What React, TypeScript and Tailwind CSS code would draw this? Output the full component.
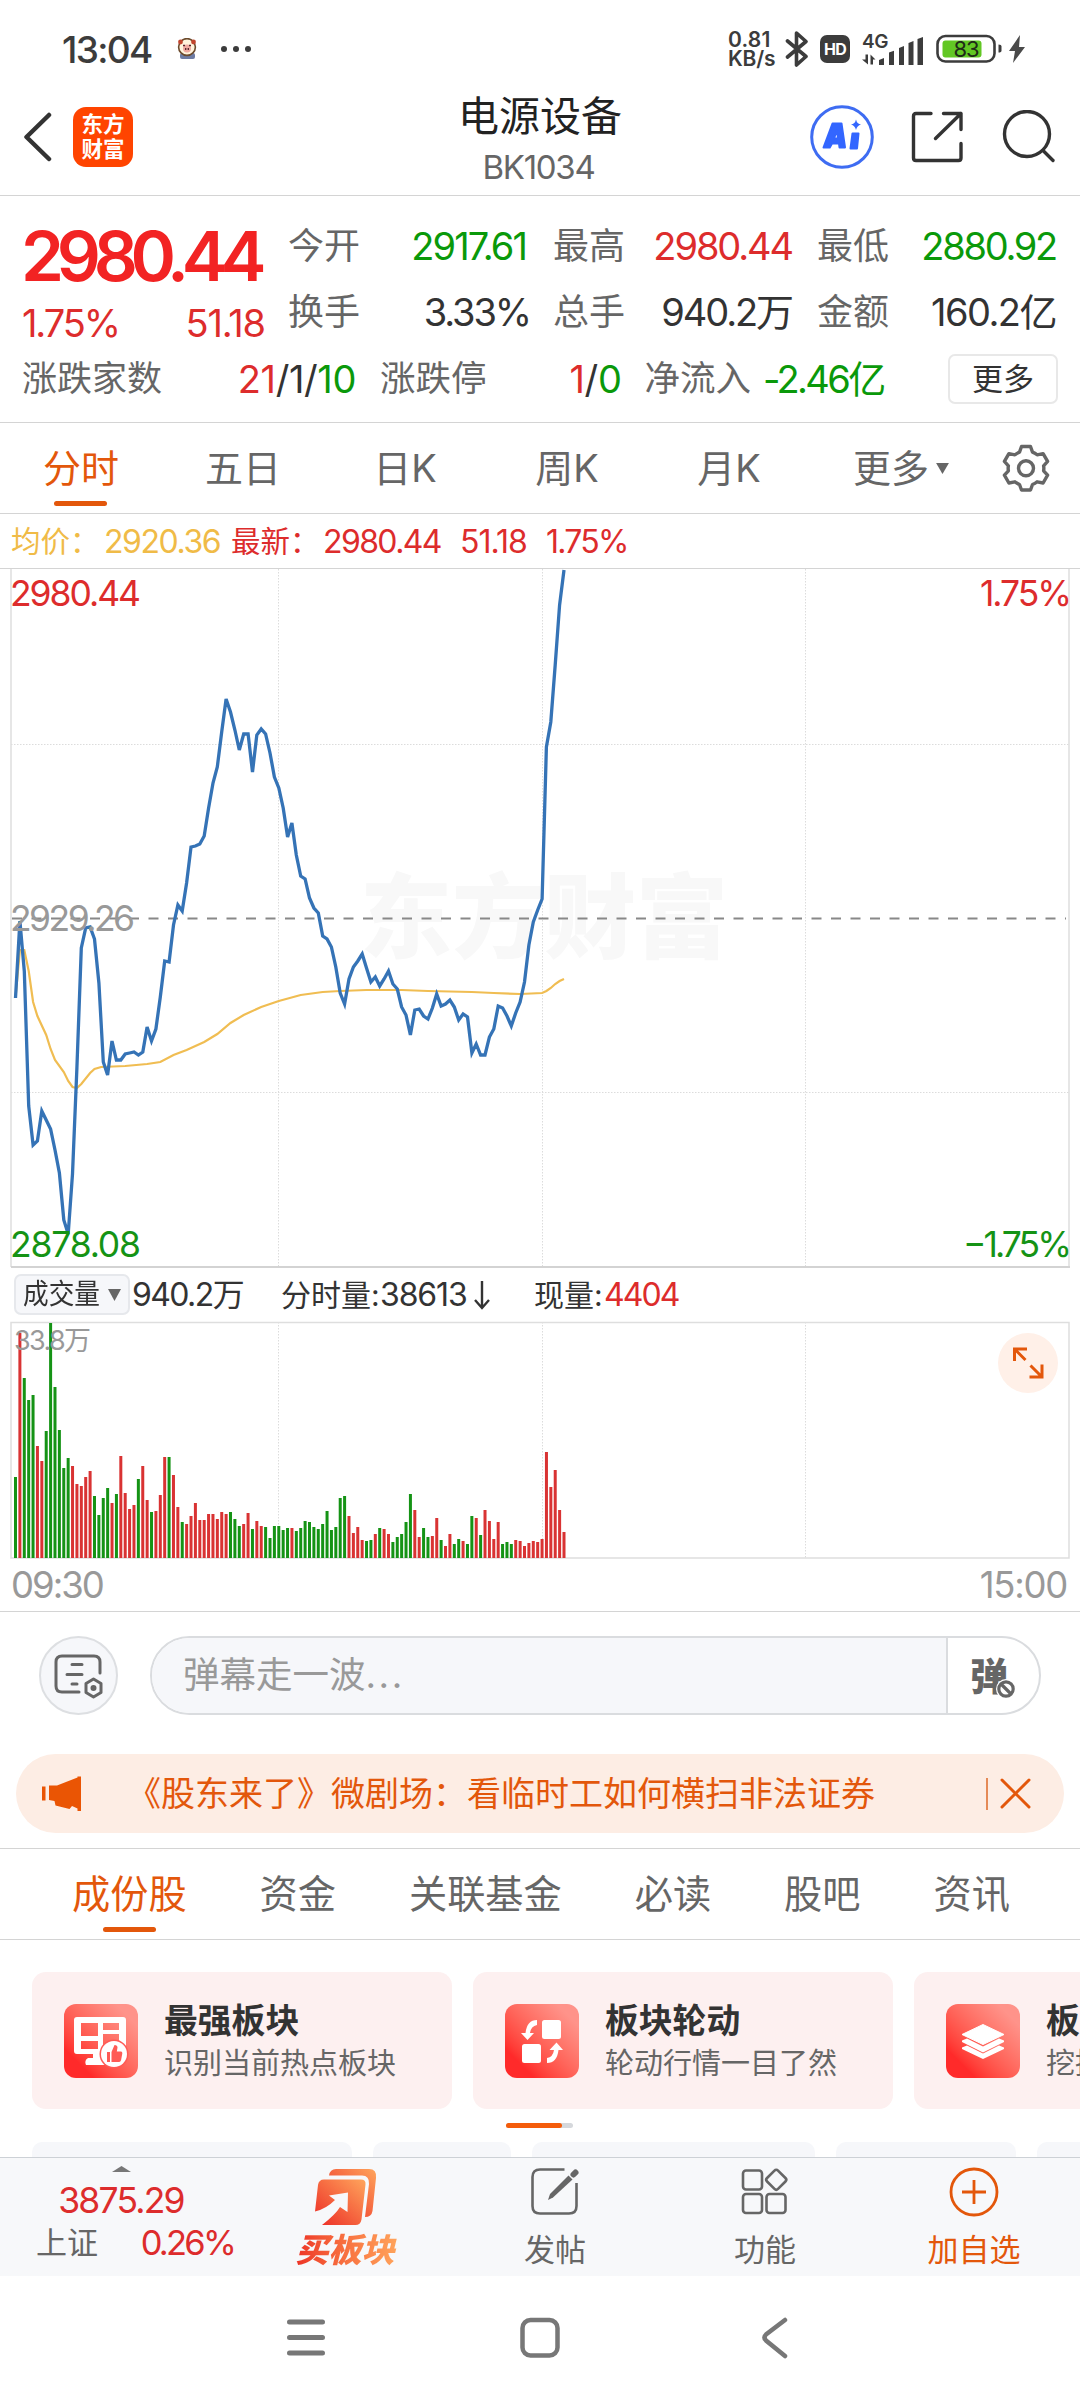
import type { ReactNode } from 'react';
import clsx from 'clsx';

const STEP = 4.388;
const FIRST_X = 15.5;

// one value per trading minute, measured from the top of the price chart
const priceLine = [
  430, 353, 403, 538, 577, 573, 543, 552, 561, 582, 605, 652, 666, 606, 500, 380, 360, 359, 371, 415,
  494, 507, 473, 492, 492, 486, 485, 484, 487, 484, 459, 473, 461, 429, 393, 394, 357, 337, 343, 315,
  279, 278, 276, 268, 240, 215, 199, 164, 131, 144, 162, 182, 166, 166, 204, 167, 161, 166, 185, 209,
  220, 240, 269, 255, 287, 308, 311, 330, 340, 345, 368, 371, 379, 399, 425, 436, 411, 399, 393, 386,
  400, 414, 409, 418, 411, 403, 416, 421, 439, 447, 467, 442, 441, 448, 451, 440, 426, 438, 436, 432,
  439, 452, 446, 449, 485, 476, 487, 487, 469, 461, 438, 440, 448, 458, 445, 434, 414, 377, 354, 342,
  331, 179, 154, 97, 37, 2,
];

const averageLine: [number, number][] = [
  [0, 430], [1, 382], [2, 382], [3, 403], [4, 434], [5, 448], [7, 467], [8, 481], [9, 492], [11, 504],
  [12, 513], [13, 519], [14, 520], [15, 516], [17, 505], [18, 501], [19.5, 499], [25, 498], [30, 496],
  [33, 494], [36, 487], [39, 482], [41, 478], [43, 474], [46, 466], [49, 455], [52, 447], [56, 439],
  [60, 433], [65, 427], [70, 424], [74, 423], [80, 422], [88, 422], [94, 423], [104, 424], [109, 425],
  [115, 426], [120, 425], [121, 423], [122, 420], [123, 416], [124, 413], [125, 411],
];

// bar heights, negative for a falling minute
const volumes = [
  -81, 225, -180, -158, -163, 112, 97, -127, -235, -171, -128, -90, -100, 92, 74, 72, 81, 87, -62, -43,
  -60, -70, 55, -64, 102, 65, 49, 53, -79, 92, 58, -46, 47, 63, 101, -101, 83, 51, -36, 34,
  42, 55, 38, 38, 44, 44, 39, 46, 44, -46, -39, -32, 34, 45, -29, 37, 32, -31, -20, -32,
  -32, -28, -30, 30, -27, -30, -37, -36, -31, -29, -34, -47, -28, -31, -60, -62, 42, 25, 31, 18,
  -17, -18, 24, -30, 29, 24, -16, -21, -24, -36, -64, 48, 21, -30, -21, 22, 40, -18, 12, 24,
  -14, -19, 17, -14, -42, 40, -23, 48, 37, 19, 36, -14, -16, -14, 18, 17, 12, 15, 17, 16,
  19, 106, 71, 88, 48, 26,
];

const minuteX = (i: number) => FIRST_X + i * STEP;

function Num({ children, className = 'tracking-[-0.055em]' }: { children: ReactNode; className?: string }) {
  return <span className={clsx('whitespace-pre', className)}>{children}</span>;
}

function StatusBar() {
  return (
    <div className="flex items-center h-[98px] pl-[62px] pr-[54px] text-[#3c3c3c]">
      <Num className="w-[90px] text-[37px] font-medium tracking-[-0.045em]">13:04</Num>
      <svg className="ml-[25px]" width="20" height="22" viewBox="0 0 20 22">
        <rect x="3" y="15" width="15" height="6" rx="2" fill="#6d7ba3" />
        <circle cx="10" cy="9" r="8.4" fill="#fff3dc" stroke="#6b4a2c" strokeWidth="1.6" />
        <circle cx="3.5" cy="4" r="2.4" fill="#c2452d" />
        <circle cx="16.5" cy="4" r="2.4" fill="#c2452d" />
        <circle cx="10" cy="10.5" r="4" fill="#f0a9a0" />
        <path d="M6 7.5h2M12 7.5h2M8.7 10v2M11.3 10v2" stroke="#54232a" strokeWidth="1.3" />
      </svg>
      <svg className="ml-[23px]" width="32" height="8" viewBox="0 0 32 8" fill="#3c3c3c">
        <circle cx="4" cy="4" r="3" />
        <circle cx="16" cy="4" r="3" />
        <circle cx="28" cy="4" r="3" />
      </svg>
      <div className="ml-auto flex items-center">
        <div className="w-[49px] text-[21px] leading-[19px] font-semibold">
          <div className="tracking-[0.01em]">0.81</div>
          <div className="tracking-[-0.01em]">KB/s</div>
        </div>
        <svg className="ml-[8px]" width="24" height="38" viewBox="0 0 24 38" fill="none" stroke="#3c3c3c" strokeWidth="3.6" strokeLinejoin="round" strokeLinecap="round">
          <path d="M2.5 11 21 26.5 11.5 35V3L21 11.5 2.5 27" />
        </svg>
        <div className="ml-[11px] flex h-[28px] w-[30px] items-center justify-center rounded-[7px] bg-[#3c3c3c] text-[16px] font-bold tracking-[-0.04em] text-white">
          HD
        </div>
        <div className="ml-[11px] h-[34px] w-[62px]">
          <div className="h-[16px] pl-[1px] text-[19px] leading-[19px] font-semibold tracking-[-0.02em]">4G</div>
          <svg className="-mt-[16px] block" width="62" height="34" viewBox="0 0 62 34" fill="#3c3c3c">
            <path d="M4.5 22.5h2.5v10L1 27.5h3.5zM9.5 32.5v-10l5 5H12v5z" />
            <path d="M18 28l5-2v7h-5zM28 20.5l5-1.8V33h-5zM38 16l5-2v19h-5zM47.5 11l5-2v24h-5zM56.5 7l5.5-2v28h-5.5z" />
          </svg>
        </div>
        <svg className="ml-[13px]" width="68" height="30" viewBox="0 0 68 30">
          <rect x="1.5" y="2" width="57" height="25.5" rx="8" fill="none" stroke="#3c3c3c" strokeWidth="2.6" />
          <rect x="6.5" y="6.5" width="39" height="17" rx="3" fill="#62c724" />
          <path d="M62.5 10.5q3 0 3 2v4q0 2-3 2z" fill="#3c3c3c" />
          <text x="17.5" y="22.5" fontSize="22" textLength="26" fill="#1f2a18">83</text>
        </svg>
        <svg className="ml-[4px]" width="18" height="28" viewBox="0 0 18 28" fill="#4a4a4a">
          <path d="M12 0 1 16h6L5 28 17 12h-6z" />
        </svg>
      </div>
    </div>
  );
}

function Header() {
  return (
    <div className="grid h-[98px] grid-cols-[1fr_auto_1fr] border-b border-[#d4d4d4]">
      <div className="flex items-center pl-[22px] pb-[19px]">
        <svg width="30" height="50" viewBox="0 0 30 50" fill="none" stroke="#333" strokeWidth="4.5" strokeLinecap="round" strokeLinejoin="round">
          <path d="M27 3 4.5 25 27 47" />
        </svg>
        <div className="ml-[21px] flex h-[60px] w-[60px] flex-col items-center justify-center rounded-[13px] bg-[#ff4400] text-[21.5px] font-bold leading-[25px] text-white">
          <span>东方</span>
          <span>财富</span>
        </div>
      </div>
      <div className="flex flex-col items-center">
        <div className="h-[42px] text-[41px] leading-[37px] text-[#222]">电源设备</div>
        <Num className="mt-[7px] mr-[3px] text-[33px] leading-[40px] tracking-[-0.04em] text-[#666]">BK1034</Num>
      </div>
      <div className="flex items-center justify-end pr-[24px] pb-[19px]">
        <svg width="64" height="64" viewBox="0 0 64 64">
          <circle cx="32" cy="32" r="30.3" fill="none" stroke="#3e6cf2" strokeWidth="3" />
          <path fillRule="evenodd" fill="#3366ff" stroke="#3366ff" strokeWidth="2" strokeLinejoin="round" d="M22.5 18.5h9l3.500 24h-5.5l-.5-4h-7l-2.200 4h-6.300zM27 25.500l-3 8h4z" />
          <path fill="#3366ff" stroke="#3366ff" strokeWidth="2" strokeLinejoin="round" d="M42.500 28.500h6l-1.500 15h-6.500z" />
          <path fill="#3366ff" d="M46 14.500q1 4.500 5 5-4 1-5 5.500-1-4.500-5-5.500 4-.5 5-5z" />
        </svg>
        <svg className="ml-[36px]" width="54" height="54" viewBox="0 0 54 54" fill="none" stroke="#333" strokeWidth="3.4" strokeLinecap="round" strokeLinejoin="round">
          <path d="M21 3.5H6Q3.5 3.5 3.5 6v42q0 2.5 2.5 2.5h42.5q2.5 0 2.5-2.5V33.5" />
          <path d="M33.5 3.5H51v16M51 3.5 25.5 28.5" />
        </svg>
        <svg className="ml-[38px]" width="54" height="54" viewBox="0 0 54 54" fill="none" stroke="#333" strokeWidth="3.4" strokeLinecap="round">
          <circle cx="25" cy="24" r="22.5" />
          <path d="M41 40.5 51 50.5" />
        </svg>
      </div>
    </div>
  );
}

const quotes = [
  { label: '今开', value: '2917.61', color: 'pr-[2px] text-[#0a990a] tracking-[-0.05em]' },
  { label: '最高', value: '2980.44', color: 'text-[#dd2c2c] tracking-[-0.055em]' },
  { label: '最低', value: '2880.92', color: 'text-[#0a990a] tracking-[-0.06em]' },
  { label: '换手', value: '3.33%', color: '-mr-[2px] text-[#333] tracking-[-0.055em]' },
  { label: '总手', value: '940.2万', color: 'text-[#333] tracking-[-0.055em]' },
  { label: '金额', value: '160.2亿', color: 'text-[#333] tracking-[-0.04em]' },
];

function Quote() {
  return (
    <div className="h-[227px] border-b border-[#d4d4d4] pl-[23px] pr-[22px] pt-[17px]">
      <div className="flex h-[132px]">
        <div className="w-[240px] text-[#dd2c2c]">
          <div className="-ml-[2px] flex h-[86px] items-center">
            <Num className="text-[69px] font-semibold tracking-[-0.105em] text-[#f22323]">2980.44</Num>
          </div>
          <div className="-ml-[1px] flex h-[48px] items-center justify-between text-[38px]">
            <Num className="tracking-[-0.055em]">1.75%</Num>
            <Num className="-mr-[2px] tracking-[-0.03em]">51.18</Num>
          </div>
        </div>
        <div className="ml-[25px] grid grid-cols-[240px_239px_239px] gap-x-[25px] grid-rows-[66px_66px]">
          {quotes.map((q) => (
            <div key={q.label} className="flex items-center justify-between">
              <span className="text-[36px] text-[#666]">{q.label}</span>
              <Num className={clsx('text-[38px]', q.color)}>{q.value}</Num>
            </div>
          ))}
        </div>
      </div>
      <div className="-ml-[1px] flex h-[67px] items-center text-[35px] text-[#666]">
        <span className="w-[214px]">涨跌家数</span>
        <Num className="w-[120px] text-right text-[38px] tracking-[-0.01em] text-[#333]">
          <span className="text-[#dd2c2c]">21</span>/1/<span className="text-[#0a990a]">10</span>
        </Num>
        <span className="ml-[24px] text-[35.5px]">涨跌停</span>
        <Num className="w-[135px] text-right text-[38px] tracking-[-0.01em] text-[#333]">
          <span className="text-[#dd2c2c]">1</span>/<span className="text-[#0a990a]">0</span>
        </Num>
        <span className="ml-[23px] text-[35.5px]">净流入</span>
        <Num className="ml-[12px] text-[38px] tracking-[-0.07em] text-[#0a990a]">-2.46亿</Num>
        <span className="ml-auto flex h-[50px] w-[110px] items-center justify-center rounded-[7px] border-2 border-[#e8e8e8] text-[31px] text-[#333]">
          更多
        </span>
      </div>
    </div>
  );
}

function PeriodTabs() {
  return (
    <div className="grid h-[91px] grid-cols-[162px_162px_162px_162px_162px_182px_1fr] items-center border-b border-[#d4d4d4] text-center text-[38px] text-[#666]">
      <div className="relative text-[#e3570b]">
        分时
        <span className="absolute bottom-[-19px] left-[54px] h-[5px] w-[53px] rounded-full bg-[#e3570b]" />
      </div>
      <div>五日</div>
      <div>日K</div>
      <div>周K</div>
      <div>月K</div>
      <div className="flex items-center justify-center gap-[7px]">
        更多
        <svg width="13" height="11" viewBox="0 0 14 12" fill="#666">
          <path d="M0 0h14L7 12z" />
        </svg>
      </div>
      <svg className="ml-[9px]" width="50" height="50" viewBox="0 0 50 50" fill="none" stroke="#666" strokeWidth="3.4" strokeLinejoin="round">
        <path d="M20.5 3.5h9l2 5.6q2.5 1 4.6 2.7l6-1.2 4.5 7.8-4 4.4q.5 2.5 0 5l4 4.4-4.5 7.8-6-1.2q-2.1 1.7-4.6 2.7l-2 5.5h-9l-2-5.5q-2.5-1-4.6-2.7l-6 1.2-4.5-7.8 4-4.4q-.5-2.5 0-5l-4-4.4 4.5-7.8 6 1.2q2.1-1.7 4.6-2.7z" />
        <circle cx="25" cy="25.3" r="7.5" />
      </svg>
    </div>
  );
}

function Legend() {
  return (
    <div className="flex h-[55px] items-center text-[32px] text-[#dd2c2c]">
      <span className="ml-[11px] w-[93px] text-[29.5px] text-[#f0bb47] whitespace-nowrap">均价：</span>
      <Num className="w-[127px] tracking-[-0.045em] text-[#f0bb47]">2920.36</Num>
      <span className="w-[92px] text-[29.5px] whitespace-nowrap">最新：</span>
      <Num className="w-[137px] tracking-[-0.05em]">2980.44</Num>
      <Num className="w-[86px] tracking-[-0.03em]">51.18</Num>
      <Num className="tracking-[-0.055em]">1.75%</Num>
    </div>
  );
}

function PriceChart() {
  const price = priceLine.map((y, i) => `${minuteX(i).toFixed(1)},${y}`).join(' ');
  const average = averageLine.map(([i, y]) => `${minuteX(i).toFixed(1)},${y}`).join(' ');
  return (
    <svg className="-mt-[1px] block" width="1080" height="700" viewBox="0 0 1080 700" fontSize="35.5">
      <text x="360" y="383" fontSize="92" fontWeight="900" fill="#f8f8f8" textLength="368">东方财富</text>
      <g stroke="#dcdcdc" strokeDasharray="1.5 1.5">
        <path d="M278.5 1V699M542.5 1V699M805.5 1V699M11 176.5H1069M11 524.5H1069" />
      </g>
      <path d="M0 .5H1080" stroke="#d4d4d4" />
      <path d="M11 1V699M1069 1V699" stroke="#dedede" strokeWidth="1.5" />
      <path d="M11 699H1070" stroke="#d3d3d3" strokeWidth="2" />
      <text x="10" y="38" textLength="131" fill="#dd2c2c">2980.44</text>
      <text x="980" y="38" textLength="92" fill="#dd2c2c">1.75%</text>
      <path d="M12 350.5H1066" stroke="#888" strokeWidth="2" strokeDasharray="10 9.5" />
      <polyline points={average} fill="none" stroke="#f0bd52" strokeWidth="2.200" />
      <polyline points={price} fill="none" stroke="#3573b6" strokeWidth="3.300" />
      <text x="10" y="363" textLength="125" fill="#999">2929.26</text>
      <text x="10" y="689" textLength="131" fill="#159315">2878.08</text>
      <text x="963" y="689" textLength="109" fill="#159315">−1.75%</text>
    </svg>
  );
}

function VolumeInfo() {
  return (
    <div className="flex h-[53px] items-center text-[32px] text-[#333]">
      <span className="ml-[14px] flex h-[41px] w-[116px] items-center justify-between rounded-[7px] border-2 border-[#e6e8ec] bg-[#f6f7fa] pl-[7px] pr-[7px]">
        <span className="w-[78px] origin-left scale-x-[0.9] text-[28.5px] whitespace-nowrap">成交量</span>
        <svg width="13" height="12" viewBox="0 0 13 12" fill="#666">
          <path d="M0 0h13L6.5 12z" />
        </svg>
      </span>
      <Num className="ml-[2px] w-[149px] tracking-[-0.05em]">940.2万</Num>
      <span className="w-[99px] text-[30px] whitespace-nowrap">分时量:</span>
      <Num className="w-[93px] tracking-[-0.035em]">38613</Num>
      <svg className="mr-[43px]" width="18" height="30" viewBox="0 0 18 30" fill="none" stroke="#333" strokeWidth="2.4">
        <path d="M9 1v27M2 20l7 8 7-8" />
      </svg>
      <span className="w-[70px] text-[30px] whitespace-nowrap">现量:</span>
      <Num className="tracking-[-0.06em] text-[#dd2c2c]">4404</Num>
    </div>
  );
}

function VolumeChart() {
  return (
    <svg className="block" width="1080" height="238" viewBox="0 0 1080 238">
      <g stroke="#dcdcdc" strokeDasharray="1.5 1.5">
        <path d="M278.5 1V237M542.5 1V237M805.5 1V237" />
      </g>
      <path d="M11 1.5H1069V237H11z" fill="none" stroke="#dedede" strokeWidth="1.5" />
      {volumes.map((v, i) => (
        <rect key={i} x={minuteX(i) - 1.5} y={237 - Math.abs(v)} width="3" height={Math.abs(v)} fill={v > 0 ? '#d93333' : '#159315'} />
      ))}
      <text x="14" y="28.5" fontSize="27" fill="#999" textLength="77">33.8万</text>
      <circle cx="1028" cy="42" r="30" fill="#fff0e8" />
      <path d="M1025.5 39 1015 28.5M1014.5 40V28h12.5M1030.5 44.5 1041 55M1042 43.5V56h-12.5" fill="none" stroke="#e3570b" strokeWidth="3" />
    </svg>
  );
}

function DanmuBar() {
  return (
    <div className="flex h-[127px] items-center pl-[39px]">
      <div className="flex h-[79px] w-[79px] items-center justify-center rounded-full border-2 border-[#dddfe2] bg-[#f6f7fa]">
        <svg width="52" height="48" viewBox="0 0 52 48" fill="none" stroke="#666" strokeWidth="3" strokeLinecap="round">
          <path d="M26 40H9q-6 0-6-6V10q0-6 6-6h32q6 0 6 6v11" />
          <path d="M19 12.5h10M14 22.5h15M19 32h5" />
          <path d="M40.5 27 48 31.5v9L40.5 45 33 40.5v-9z" strokeLinejoin="round" />
          <circle cx="40.5" cy="36" r="1.5" fill="#666" />
        </svg>
      </div>
      <div className="ml-[32px] flex h-[79px] w-[891px] overflow-hidden rounded-full border-2 border-[#dadcdf] bg-white">
        <div className="flex w-[796px] items-center border-r-2 border-[#dadcdf] bg-[#f6f7fa] pl-[31px] text-[36.5px] text-[#999]">
          弹幕走一波<span className="tracking-[0.07em]">...</span>
        </div>
        <div className="relative ml-[22px] flex items-center">
          <span className="text-[38px] leading-[46px] font-black text-[#666]">弹</span>
          <svg className="absolute left-[23px] top-[39px]" width="26" height="24" viewBox="0 0 26 24">
            <circle cx="13" cy="12" r="10" fill="#fff" />
            <circle cx="13" cy="12" r="7.2" fill="none" stroke="#666" strokeWidth="3.2" />
            <path d="M8.5 7.5 17.5 16.5" stroke="#666" strokeWidth="3.2" />
          </svg>
        </div>
      </div>
    </div>
  );
}

function Notice() {
  return (
    <div className="mx-[16px] mt-[15px] flex h-[79px] items-center rounded-full bg-[#fdede4] text-[#e3570b]">
      <svg className="ml-[25px]" width="41" height="36" viewBox="0 0 41 36" fill="#ea5504">
        <path d="M1 10.5h3.5v14H1zM8 9.5h8L36.5 1.5V.5H40V35h-3.5v-2.5L31 30l-2.5 3-14-3.5-1-4.5L8 24z" />
      </svg>
      <div className="ml-[45px] text-[34px] whitespace-nowrap">《股东来了》微剧场：看临时工如何横扫非法证券</div>
      <span className="ml-auto h-[32px] w-[2px] bg-[#e58a57]" />
      <svg className="ml-[12px] mr-[33px]" width="31" height="31" viewBox="0 0 31 31" stroke="#e3570b" strokeWidth="3" strokeLinecap="round">
        <path d="M2 2 29 29M29 2 2 29" />
      </svg>
    </div>
  );
}

function SectionTabs() {
  return (
    <div className="mt-[15px] flex h-[92px] items-center gap-[73px] border-y border-[#d4d4d4] pl-[72px] text-[38.2px] text-[#666]">
      <div className="relative text-[#e3570b]">
        成份股
        <span className="absolute bottom-[-19px] left-[31px] h-[5px] w-[53px] rounded-full bg-[#e3570b]" />
      </div>
      {['资金', '关联基金', '必读', '股吧', '资讯'].map((t) => (
        <div key={t}>{t}</div>
      ))}
    </div>
  );
}

function StrongIcon() {
  return (
    <svg width="74" height="74" viewBox="0 0 74 74">
      <path fillRule="evenodd" fill="#fff" d="M13 13h46q3 0 3 3v33q0 3-3 3H39v2h4v7H22q-2-5 2-7h5v-4H13q-3 0-3-3V16q0-3 3-3zm4 6v13h17V19zm22 0v7h16v-7zm0 11v15h16V30zM17 37v8h17v-8z" />
      <circle cx="50" cy="50" r="14.5" fill="#ff5a55" />
      <circle cx="50" cy="50" r="13" fill="#fff" />
      <path d="M43 48h3v10h-3zM47.5 48l3-7q3 0 3 2.5l-.7 4h4.2q1.500 0 1.300 2l-1.200 6.500q-.5 2-2 2h-7.600z" fill="#ff5a55" />
    </svg>
  );
}

function RotateIcon() {
  return (
    <svg width="74" height="74" viewBox="0 0 74 74" fill="#fff">
      <rect x="37" y="16" width="19" height="19" rx="2.5" />
      <rect x="17" y="40" width="19" height="19" rx="2.5" />
      <path d="M32 16v5q-6 1-7 8h4L22.5 36 16 29h4.500Q22 16 32 16zM42 59v-5q6-1 7-8h-4.500l7-7.500 6.500 7.500h-4.500Q52 59 42 59z" />
    </svg>
  );
}

function LayersIcon() {
  return (
    <svg width="74" height="74" viewBox="0 0 74 74" fill="#fff">
      <path d="M37 20.5 58 30.5 37 40.5 16 30.5z" stroke="#fff" strokeLinejoin="round" />
      <path d="M16 36.5l5-2 16 8 16-8 5 2v1.500L37 48.500 16 38zM16 43.500l5-2 16 8 16-8 5 2V45L37 55 16 45z" />
    </svg>
  );
}

const cards = [
  { title: '最强板块', desc: '识别当前热点板块', icon: <StrongIcon /> },
  { title: '板块轮动', desc: '轮动行情一目了然', icon: <RotateIcon /> },
  { title: '板', desc: '挖掘', icon: <LayersIcon /> },
];

function Cards() {
  return (
    <div className="h-[217px] overflow-hidden pl-[32px] pt-[32px]">
      <div className="flex gap-[21px]">
        {cards.map((c) => (
          <div key={c.title} className="flex h-[137px] w-[420px] shrink-0 items-center rounded-[14px] bg-[#fdf0f0] pl-[32px]">
            <div className="h-[74px] w-[74px] rounded-[12px] bg-linear-to-tr from-[#ff2a2a] from-20% to-[#ff938a] to-85%">{c.icon}</div>
            <div className="ml-[26px] whitespace-nowrap pt-[3px]">
              <div className="text-[33.8px] font-bold leading-[42px] text-[#333]">{c.title}</div>
              <div className="mt-[1px] text-[29px] leading-[42px] text-[#666]">{c.desc}</div>
            </div>
          </div>
        ))}
      </div>
      <div className="ml-[474px] mt-[14px] h-[5px] w-[67px] rounded-full bg-[#d5d8dc]">
        <div className="h-full w-[56px] rounded-full bg-[#f45c0b]" />
      </div>
      <div className="mt-[14px] flex gap-[21px]">
        <span className="h-[40px] w-[320px] shrink-0 rounded-[10px] bg-[#f6f7fa]" />
        <span className="h-[40px] w-[138px] shrink-0 rounded-[10px] bg-[#f6f7fa]" />
        <span className="h-[40px] w-[283px] shrink-0 rounded-[10px] bg-[#f6f7fa]" />
        <span className="h-[40px] w-[180px] shrink-0 rounded-[10px] bg-[#f6f7fa]" />
        <span className="h-[40px] w-[180px] shrink-0 rounded-[10px] bg-[#f6f7fa]" />
      </div>
    </div>
  );
}

function BottomBar() {
  return (
    <div className="flex h-[119px] border-t border-[#cdd1d6] bg-[#f7f8fa] text-[31px] text-[#666]">
      <div className="flex w-[242px] flex-col items-center pt-[8px]">
        <svg className="block" width="19" height="6" viewBox="0 0 19 6" fill="#777">
          <path d="M9.5 0 19 6H0z" />
        </svg>
        <Num className="mt-[8px] text-[35.5px] leading-[42px] tracking-[-0.05em] text-[#dd2c2c]">3875.29</Num>
        <div className="flex w-[226px] items-center justify-between pl-[28px] leading-[42px]">
          <span>上证</span>
          <Num className="text-[34.5px] tracking-[-0.08em] text-[#dd2c2c]">0.26%</Num>
        </div>
      </div>
      <div className="flex w-[208px] flex-col items-center pt-[10px]">
        <svg className="block" width="64" height="58" viewBox="0 0 64 58">
          <defs>
            <linearGradient id="buy" x1="0" y1="1" x2="1" y2="0">
              <stop offset="0" stopColor="#ec2a24" />
              <stop offset="1" stopColor="#ffa55c" />
            </linearGradient>
          </defs>
          <path fill="url(#buy)" d="M15 7.5q1-6.5 7-6.5h33q8 0 7 9l-3.500 33q-1 6-7.500 6l4-33q.5-8.500-7-8.500z" />
          <path fill="url(#buy)" d="M10 11.5h37q5 0 4.500 5l-4 35q-1 5.500-6 5.500H8Q22 46 26 39l7.500 5L34 24.500l-19 3 6 4.500Q12 41 1 43.500L4 17q.8-5.500 6-5.500z" />
        </svg>
        <div className="mt-[1px] mr-[2px] bg-linear-to-r from-[#ec2a24] to-[#ffa55c] bg-clip-text px-[4px] text-[33px] font-black italic leading-[46px] text-transparent">买板块</div>
      </div>
      <div className="flex w-[210px] flex-col items-center pt-[9px]">
        <svg className="block" width="50" height="50" viewBox="0 0 50 50" fill="none" stroke="#666" strokeWidth="2.6">
          <path d="M34.5 2.5H10q-7.5 0-7.5 7.5v29q0 7.5 7.5 7.5h29q7.5 0 7.5-7.5V16" />
          <path d="M18 33l2-6L38.5 8.5l4 4L23 30.5z" fill="#666" stroke="none" />
          <path d="M43.5 7.5 45.5 5.5" strokeWidth="6" strokeLinecap="round" />
        </svg>
        <span className="mt-[12px] leading-[42px]">发帖</span>
      </div>
      <div className="flex w-[210px] flex-col items-center pt-[9px]">
        <svg className="block" width="50" height="50" viewBox="0 0 50 50" fill="none" stroke="#666" strokeWidth="2.6">
          <rect x="3" y="3.5" width="19" height="19" rx="3" />
          <rect x="3" y="27" width="19" height="19" rx="3" />
          <rect x="26.5" y="27" width="19" height="19" rx="3" />
          <rect x="28.5" y="5" width="15.5" height="15.5" rx="2.5" transform="rotate(45 36.25 12.75)" />
        </svg>
        <span className="mt-[12px] leading-[42px]">功能</span>
      </div>
      <div className="flex w-[208px] flex-col items-center pt-[9px] text-[#e3570b]">
        <svg className="block" width="50" height="50" viewBox="0 0 50 50" fill="none" stroke="#e3570b" strokeWidth="2.8">
          <circle cx="25" cy="25" r="23" />
          <path d="M13 25h24M25 13v24" />
        </svg>
        <span className="mt-[12px] leading-[42px]">加自选</span>
      </div>
    </div>
  );
}

function NavBar() {
  return (
    <div className="flex h-[124px] items-center pl-[285px]">
      <svg width="42" height="42" viewBox="0 0 42 42" stroke="#777" strokeWidth="5" strokeLinecap="round">
        <path d="M4.5 5H37.5M4.5 20.5H37.5M4.5 36H37.5" />
      </svg>
      <svg className="ml-[192px]" width="42" height="42" viewBox="0 0 42 42" fill="none" stroke="#777" strokeWidth="4.5">
        <rect x="3.5" y="3" width="35" height="35.5" rx="8" />
      </svg>
      <svg className="ml-[199px]" width="30" height="42" viewBox="0 0 30 42" fill="none" stroke="#777" strokeWidth="4.5" strokeLinecap="round">
        <path d="M25 3 6 17.5q-3 3 0 6L25 39" />
      </svg>
    </div>
  );
}

export default function App() {
  return (
    <div className="h-[2400px] w-[1080px] overflow-hidden bg-white font-['Inter','Noto_Sans_CJK_SC',sans-serif] leading-none">
      <StatusBar />
      <Header />
      <Quote />
      <PeriodTabs />
      <Legend />
      <PriceChart />
      <VolumeInfo />
      <VolumeChart />
      <div className="flex h-[53px] items-center justify-between border-b border-[#d4d4d4] pl-[11px] pr-[13px] text-[36.5px] text-[#999]">
        <Num className="tracking-[-0.055em]">09:30</Num>
        <Num className="tracking-[-0.035em]">15:00</Num>
      </div>
      <DanmuBar />
      <Notice />
      <SectionTabs />
      <Cards />
      <BottomBar />
      <NavBar />
    </div>
  );
}
